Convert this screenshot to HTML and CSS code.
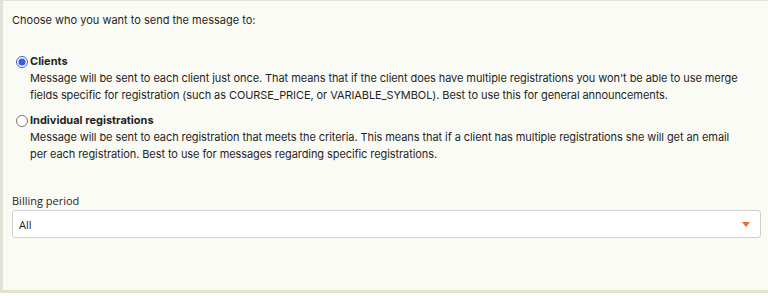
FILE: index.html
```html
<!DOCTYPE html>
<html lang="en">
<head>
  <meta charset="UTF-8">
  <title>Message recipients</title>
  <link rel="stylesheet" href="styles.css">
</head>
<body>
  <div class="panel">
    <p class="intro">Choose who you want to send the message to:</p>

    <div class="options">
      <label class="option">
        <span class="option-head">
          <input type="radio" name="target" value="clients" checked>
          <b>Clients</b>
        </span>
        <span class="option-desc">Message will be sent to each client just once. That means that if the client does have multiple registrations you won't be able to use merge fields specific for registration (such as COURSE_PRICE, or VARIABLE_SYMBOL). Best to use this for general announcements.</span>
      </label>

      <label class="option">
        <span class="option-head">
          <input type="radio" name="target" value="registrations">
          <b>Individual registrations</b>
        </span>
        <span class="option-desc">Message will be sent to each registration that meets the criteria. This means that if a client has multiple registrations she will get an email per each registration. Best to use for messages regarding specific registrations.</span>
      </label>
    </div>

    <div class="field">
      <label class="field-label" for="billing">Billing period</label>
      <div class="select">
        <span id="billing">All</span>
        <span class="caret"></span>
      </div>
    </div>
  </div>
  <div class="footer"></div>
</body>
</html>
```

FILE: styles.css
```css
body {
  margin: 0;
  background: #ffffff;
  font-family: 'Inter', sans-serif;
  color: #1f1f24;
}

.panel {
  height: 290px;
  box-sizing: border-box;
  background: #fbfbf6;
  border-top: 1px solid #e4e4da;
  border-left: 3px solid #e2e2d8;
  padding: 11px 7px 0 9px;
}

.intro {
  margin: 0;
  font-size: 11px;
  line-height: 17px;
}

.options {
  margin-top: 24px;
  display: flex;
  flex-direction: column;
  gap: 8px;
}

.option {
  display: flex;
  flex-direction: column;
  font-size: 11px;
  line-height: 17px;
}

.option-head {
  display: flex;
  align-items: center;
  gap: 2px;
}

.option-head input {
  margin: 0 0 0 4px;
  width: 12px;
  height: 12px;
  accent-color: #3b5bdb;
}

.option-desc {
  padding-left: 18px;
  padding-right: 12px;
  letter-spacing: -0.08px;
}

.field {
  margin-top: 30px;
}

.field-label {
  display: block;
  font-family: 'Open Sans', sans-serif;
  font-size: 11px;
  line-height: 16px;
  margin-bottom: 1px;
}

.select {
  display: flex;
  align-items: center;
  justify-content: space-between;
  height: 28px;
  box-sizing: border-box;
  background: #ffffff;
  border: 1px solid #cfcfcf;
  border-radius: 3px;
  padding: 0 10px 0 6px;
  font-family: 'Open Sans', sans-serif;
  font-size: 11px;
}

.caret {
  width: 0;
  height: 0;
  border-left: 4px solid transparent;
  border-right: 4px solid transparent;
  border-top: 5px solid #f26b1d;
}

.footer {
  height: 3px;
  background: #e0e4cf;
}
```
